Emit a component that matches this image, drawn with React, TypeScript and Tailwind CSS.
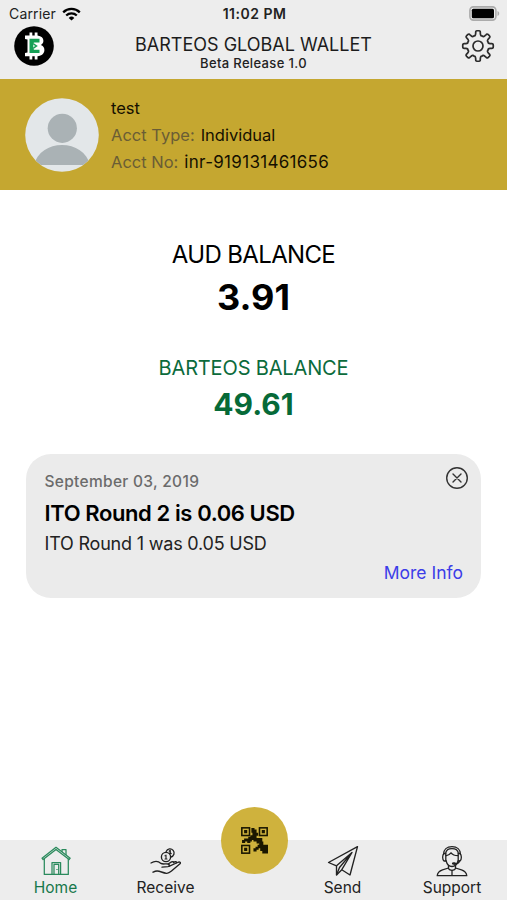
import type { ReactNode } from "react";

const polar = (r: number, deg: number) => {
  const a = ((deg - 90) * Math.PI) / 180;
  return `${(17 + r * Math.cos(a)).toFixed(2)} ${(17 + r * Math.sin(a)).toFixed(2)}`;
};

const gearPath =
  Array.from({ length: 8 }, (_, i) => {
    const c = i * 45;
    return [
      `${i === 0 ? "M" : "L"}${polar(12.4, c - 11)}`,
      `L${polar(13.8, c - 9.5)}`,
      `Q${polar(15.4, c - 9)} ${polar(15.3, c - 4)}`,
      `L${polar(15.3, c + 4)}`,
      `Q${polar(15.4, c + 9)} ${polar(13.8, c + 9.5)}`,
      `L${polar(12.4, c + 11)}`,
      `Q${polar(10, c + 16)} ${polar(10.9, c + 22.5)}`,
      `Q${polar(10, c + 29)} ${polar(12.4, c + 34)}`,
    ].join(" ");
  }).join(" ") + "Z";

function Gear() {
  return (
    <svg width="34" height="34" viewBox="0 0 34 34" fill="none" stroke="#2b2b2b" strokeWidth="1.700" strokeLinejoin="round">
      <path d={gearPath} />
      <circle cx="17" cy="17" r="5" />
    </svg>
  );
}

function Logo() {
  return (
    <svg width="40" height="40" viewBox="0 0 40 40">
      <circle cx="20" cy="20" r="19.8" fill="#000" />
      <path
        fill="#fff"
        d="M11 9.500h4.500v-3h2.800v3h2.400v-3h2.800v3.100c4 .5 5.900 2.500 5.900 5.200 0 2-1 3.500-2.600 4.300 2.500.9 3.600 2.600 3.600 5 0 3.500-2.400 5.700-6.900 6.200v3.200h-2.800v-3.200h-2.400v3.200h-2.800v-3.200H11V27l2.500-.5v-13L11 13z"
      />
      <path fill="#16a056" d="M15.500 12.800h10v3.700h-5.700v7.200h5.700V27h-10z" />
      <path fill="#16a056" d="M19.800 17.300l4 2.700-4 2.700z" />
      <path fill="#fff" d="M19.300 18.700l2 1.300-2 1.300z" />
    </svg>
  );
}

function Wifi() {
  return (
    <svg width="19" height="14" viewBox="0 0 19 14" fill="none" stroke="#000" strokeWidth="2.300">
      <path d="M1.200 5.300a12 12 0 0 1 16.600 0" />
      <path d="M4.200 8.500a7.700 7.700 0 0 1 10.600 0" />
      <path d="M9.500 13.600L6.700 10.900a4 4 0 0 1 5.600 0z" fill="#000" stroke="none" />
    </svg>
  );
}

function Battery() {
  return (
    <svg width="31" height="15" viewBox="0 0 31 15">
      <rect x=".9" y=".9" width="26" height="13.200" rx="3.500" fill="#ededed" stroke="#ababab" strokeWidth="1.600" />
      <rect x="2.800" y="2.700" width="22.200" height="9.600" rx="1.500" fill="#000" />
      <path d="M28.500 5c2.300.8 2.300 4.200 0 5z" fill="#ababab" />
    </svg>
  );
}

function Avatar() {
  return (
    <svg width="74" height="74" viewBox="0 0 74 74">
      <clipPath id="face">
        <circle cx="37" cy="37" r="36.800" />
      </clipPath>
      <circle cx="37" cy="37" r="36.800" fill="#e3e7e9" />
      <g fill="#aab2b5" clipPath="url(#face)">
        <circle cx="37.300" cy="30.300" r="14.600" />
        <path d="M9 67c3-13 15-20 28-20s25 7 28 20z" />
      </g>
    </svg>
  );
}

function Close() {
  return (
    <svg width="24" height="24" viewBox="0 0 24 24" fill="none" stroke="#333" strokeWidth="1.400" strokeLinecap="round">
      <circle cx="12" cy="12" r="10.300" />
      <path d="M8 8l8 8M16 8l-8 8" />
    </svg>
  );
}

function House() {
  return (
    <svg width="32" height="32" viewBox="0 0 32 32" fill="none" stroke="#2a8a5c" strokeWidth="1.250" strokeLinejoin="round">
      <path d="M4.300 13.700V29.400h24V13.700" />
      <path d="M2 13.200L16 2.300l14.200 10.900-1.100 1.300L16 4.400 3.100 14.500z" />
      <path d="M22 7V4.500h4V10" />
      <path d="M12 29.400V17.500h8.600v11.900M14 29.400V19.400h4.700v10M17 24v1" />
    </svg>
  );
}

function HandCoins() {
  return (
    <svg width="34" height="32" viewBox="0 0 34 32" fill="none" stroke="#222" strokeWidth="1.350" strokeLinecap="round" strokeLinejoin="round">
      <circle cx="17" cy="12" r="4.600" />
      <path d="M17 10v4M15.900 10.800H17M16 14h2" strokeWidth="1.100" />
      <path d="M17.200 6.500a4.100 4.100 0 1 1 4.700 5.500M21.200 5.500v2.500M20.300 6h.9M20.500 8.500h1.600" />
      <path d="M2 18c3.500-2.200 7.500-1.800 10 .4 1.400 1.100 4.500.2 7 .6 1.900.3 1.800 2.300 0 2.600l-6 .5" />
      <path d="M20 21.300l8.500-3.800c2.300-1.100 3.900.1 2.200 1.500L22.500 26c-1.500 1.300-3 2.500-5 2.300-4-.3-6.500-2.500-9.500-2.300-1.700.1-2.700.6-4 1.200" />
      <path d="M19.500 18.800l3-1.900c1.200-.6 2.400-.1 1.900.8M24.400 17.500c1.700-1.200 3.400-.8 3.300.3" />
    </svg>
  );
}

function Plane() {
  return (
    <svg width="32" height="32" viewBox="0 0 32 32" fill="none" stroke="#222" strokeWidth="1.350" strokeLinejoin="round">
      <path d="M30.500 1.700L1.500 17.500l8 3.300v9.200l5.300-5.300 8.200 5.300z" />
      <path d="M9.500 20.800L25 7.500 14.800 24.700M9.500 30l3-7.500L25 7.500" />
    </svg>
  );
}

function Agent() {
  return (
    <svg width="34" height="32" viewBox="0 0 34 32" fill="none" stroke="#222" strokeWidth="1.300" strokeLinecap="round" strokeLinejoin="round">
      <path d="M8.500 9.500C8.500 4.500 12 1.700 17 1.700s8.500 2.800 8.500 7.800" />
      <path d="M10.600 8.500C11 5.500 13.500 3.700 17 3.700s6 1.800 6.400 4.800" />
      <path d="M10.800 8.500H9c-1.800 1.500-1.800 6 0 7.500h1.800zM23.200 8.500H25c1.800 1.500 1.800 6 0 7.500h-1.800z" />
      <path d="M11 10.500c2.500.3 4-1.500 5-2.700 1.500 2 4 2.800 7 2.800M11 15.500c1 4 3.500 6 6 6s5-2 6-5.500" />
      <path d="M24.500 16c-.5 2-2 2.800-5 3" />
      <ellipse cx="19" cy="18.500" rx="1.500" ry=".7" fill="#222" />
      <path d="M13.500 20.500v3.200c1.500 2.300 5.500 2.300 7 0v-3.200" />
      <path d="M13.500 23l-6 1.800C4 26 2.500 28 2.200 30.700h29.600C31.500 28 30 26 26.500 24.800L20.500 23M17 25.500v5.200" />
    </svg>
  );
}

function QrCode() {
  return (
    <svg width="27" height="27" viewBox="0 0 26 26">
      <g fill="none" stroke="#1a1600" strokeWidth="1.500">
        <rect x=".8" y=".8" width="7.400" height="7.400" />
        <rect x="17.800" y=".8" width="7.400" height="7.400" />
        <rect x=".8" y="17.800" width="7.400" height="7.400" />
      </g>
      <g fill="#1a1600">
        <path d="M3 3h3v3H3zM20 3h3v3h-3zM3 20h3v3H3z" />
        <path d="M10 1h3v1.500h2v3h1.500v3H15v2h5.500v4h-2.500v1.500h-3V14h-3v-1.500h-1.500V14H9v1.500H6V14H4v1.500H1v-3h2V11h4V9.500h2V8h2V5.500h-1z" />
        <path d="M17.500 14h4v3H26v8.500h-5.500V23h-2v-2.500h-1.500V22h-2v1.500h-3v-3h2V19h2v-2h1.500z" />
      </g>
    </svg>
  );
}

function Tab({ icon, label, className }: { icon: ReactNode; label: string; className: string }) {
  return (
    <div className={`flex flex-col items-center pt-[5px] ${className}`}>
      {icon}
      <span className="text-[15.500px] leading-[21px]">{label}</span>
    </div>
  );
}

export default function App() {
  return (
    <div className="flex h-[900px] w-[507px] flex-col overflow-hidden bg-white font-['Inter',sans-serif] whitespace-nowrap text-black">
      <header className="flex h-[79px] flex-col bg-[#ededed]">
        <div className="grid h-[26px] grid-cols-3 items-center pt-px pl-[9px] pr-[7px]">
          <div className="flex items-center gap-[6px]">
            <span className="text-[14px] leading-5 tracking-[0.15px] text-[#222]">Carrier</span>
            <Wifi />
          </div>
          <span className="text-center text-[14px] leading-5 font-semibold tracking-[0.5px] text-[#222]">11:02 PM</span>
          <div className="flex justify-end">
            <Battery />
          </div>
        </div>
        <div className="flex justify-between px-[14px]">
          <div className="w-10">
            <Logo />
          </div>
          <div className="flex flex-col items-center pt-[9px]">
            <h1 className="text-[18px] leading-5 text-[#1c1c1c]">BARTEOS GLOBAL WALLET</h1>
            <p className="text-[13px] leading-4 font-medium tracking-[0.35px] text-[#222]">Beta Release 1.0</p>
          </div>
          <div className="flex w-10 justify-end pt-[3px]">
            <div className="-mr-[2px]">
              <Gear />
            </div>
          </div>
        </div>
      </header>

      <section className="flex h-[111px] items-center bg-[#c5a730] pl-[25px]">
        <Avatar />
        <div className="pt-px pl-3 text-[16.5px] leading-[27px] text-[#151000]">
          <p>test</p>
          <p><span className="mr-[6px] text-[#6a5d35]">Acct Type:</span>Individual</p>
          <p><span className="mr-[6px] text-[#6a5d35]">Acct No:</span><span className="text-[17px] tracking-[0.3px]">inr-919131461656</span></p>
        </div>
      </section>

      <section className="flex flex-col items-center pt-[49px]">
        <h2 className="text-[24px] leading-8 tracking-[-0.65px]">AUD BALANCE</h2>
        <p className="mt-[3px] text-[36px] leading-[46px] font-bold">3.91</p>
        <h2 className="mt-[34px] text-[20px] leading-7 tracking-[-0.15px] text-[#0b6b3c]">BARTEOS BALANCE</h2>
        <p className="mt-[2px] text-[30px] leading-10 font-bold text-[#066a38]">49.61</p>
      </section>

      <section className="mx-[26px] mt-[30px] flex h-[144px] flex-col rounded-[25px] bg-[#ebebeb] pt-3 pr-[18px] pl-[18.5px]">
        <div className="-mr-[6px] flex items-start justify-between">
          <p className="pt-[6px] text-[15.500px] leading-5 font-medium tracking-[0.3px] text-[#6b6b6b]">September 03, 2019</p>
          <Close />
        </div>
        <h3 className="mt-[7px] text-[22px] leading-7 font-semibold tracking-[-0.4px]">ITO Round 2 is 0.06 USD</h3>
        <p className="mt-[5px] text-[18px] leading-6 tracking-[-0.2px] text-[#222]">ITO Round 1 was 0.05 USD</p>
        <a className="mt-[5px] self-end text-[17.500px] leading-6 text-[#3c3de8]">More Info</a>
      </section>

      <nav className="relative mt-auto flex h-[60px] bg-[#ededed] text-[#222]">
        <Tab icon={<House />} label="Home" className="w-[111px] text-[#17784b]" />
        <Tab icon={<HandCoins />} label="Receive" className="w-[109px]" />
        <div className="w-[68px]" />
        <Tab icon={<Plane />} label="Send" className="w-[109px]" />
        <Tab icon={<Agent />} label="Support" className="w-[110px]" />
        <button className="absolute -top-[33px] left-[220.5px] flex size-[67px] items-center justify-center rounded-full bg-[#cfb23d]">
          <QrCode />
        </button>
      </nav>
    </div>
  );
}
